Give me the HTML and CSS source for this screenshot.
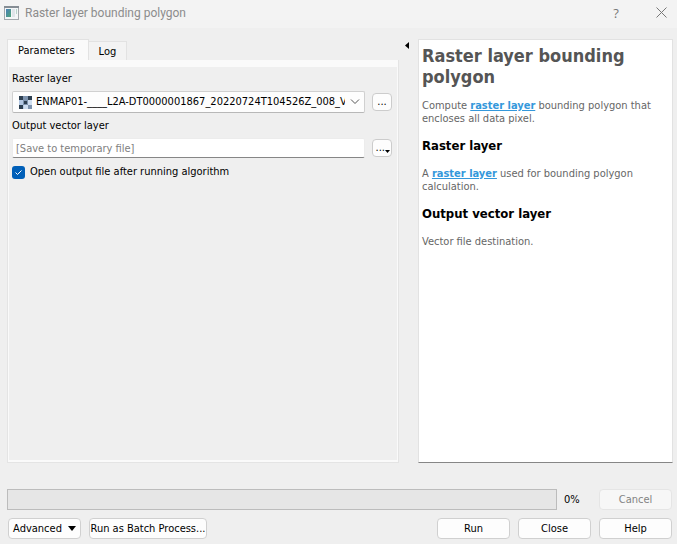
FILE: index.html
```html
<!DOCTYPE html>
<html lang="en">
<head>
<meta charset="utf-8">
<title>Raster layer bounding polygon</title>
<link rel="stylesheet" href="styles.css">
</head>
<body>
<header class="titlebar">
  <svg class="app-icon" width="15" height="14" viewBox="0 0 15 14" aria-hidden="true">
    <defs><linearGradient id="pane" x1="0" y1="0" x2="1" y2="1"><stop offset="0" stop-color="#4a80b8"/><stop offset="1" stop-color="#4fa578"/></linearGradient></defs>
    <rect x="0.5" y="0.5" width="14" height="13" fill="#f4f6f8" stroke="#a3a8ad"/>
    <path d="M0 1h15" stroke="#858d94" stroke-width="2"/>
    <rect x="2" y="3" width="5" height="8" fill="url(#pane)"/>
    <rect x="8" y="3" width="3" height="8" fill="#dfe5ea"/>
    <rect x="12" y="3" width="1" height="5" fill="#b9d4cc"/>
  </svg>
  <h1 class="window-title">Raster layer bounding polygon</h1>
  <button class="caption-button" type="button" aria-label="Help">?</button>
  <button class="caption-button" type="button" aria-label="Close window">
    <svg width="11" height="11" viewBox="0 0 11 11"><path d="M.5.5l10 10M10.500.5l-10 10" fill="none" stroke="#777" stroke-width="1"/></svg>
  </button>
</header>
<main class="dialog">
  <div class="content">
    <section class="left">
      <div class="tabs" role="tablist">
        <button class="tab active" type="button" role="tab" aria-selected="true">Parameters</button>
        <button class="tab" type="button" role="tab" aria-selected="false">Log</button>
      </div>
      <div class="pane">
        <form class="form">
          <label class="label" for="raster">Raster layer</label>
          <div class="row">
            <div class="combo">
              <svg class="raster-icon" width="13" height="13" viewBox="0 0 13 13" aria-hidden="true">
                <rect width="13" height="13" fill="#b3c8e3"/>
                <path fill="#2c3e50" d="M0 0h4v4H0zM9 0h4v4H9zM5 5h3v3H5zM0 9h4v4H0z"/>
                <path fill="#7d92ad" d="M4 0h5v4H4zM4 4h1v5H4zM8 4h1v5H8zM5 4h3v1H5zM5 8h3v1H5zM9 9h4v4H9z"/>
                <path fill="#cfdef0" d="M5 9h4v4H5zM9 4h4v5H9z"/>
              </svg>
              <select class="select" id="raster"><option>ENMAP01-____L2A-DT0000001867_20220724T104526Z_008_V010302</option></select>
              <svg class="chevron" width="10" height="6" viewBox="0 0 10 6" aria-hidden="true"><path d="M1 .5l4 4 4-4" fill="none" stroke="#555"/></svg>
            </div>
            <button class="browse" type="button" aria-label="Select raster layer">...</button>
          </div>
          <label class="label" for="output">Output vector layer</label>
          <div class="row">
            <input class="text" id="output" type="text" placeholder="[Save to temporary file]">
            <button class="browse menu" type="button" aria-label="Output options">...<svg class="browse-arrow" width="5" height="3" viewBox="0 0 5 3"><path d="M0 0h5L2.500 3z"/></svg></button>
          </div>
          <label class="check"><input type="checkbox" checked>Open output file after running algorithm</label>
        </form>
      </div>
    </section>
    <button class="splitter" type="button" aria-label="Collapse help"><svg width="4" height="7" viewBox="0 0 4 7"><path d="M4 0v7L0 3.500z"/></svg></button>
    <article class="help">
      <h2>Raster layer bounding polygon</h2>
      <p>Compute <a href="#">raster layer</a> bounding polygon that encloses all data pixel.</p>
      <h3>Raster layer</h3>
      <p>A <a href="#">raster layer</a> used for bounding polygon calculation.</p>
      <h3>Output vector layer</h3>
      <p>Vector file destination.</p>
    </article>
  </div>
  <div class="progress-row">
    <div class="progress" role="progressbar" aria-label="Progress" aria-valuenow="0" aria-valuemin="0" aria-valuemax="100"></div>
    <span class="percent">0%</span>
    <button class="button" type="button" disabled>Cancel</button>
  </div>
  <footer class="actions">
    <button class="button advanced" type="button">Advanced <svg width="8" height="5" viewBox="0 0 8 5"><path d="M0 0h8L4 5z"/></svg></button>
    <button class="button batch" type="button">Run as Batch Process...</button>
    <span class="spacer"></span>
    <button class="button" type="button">Run</button>
    <button class="button" type="button">Close</button>
    <button class="button" type="button">Help</button>
  </footer>
</main>
</body>
</html>
```
FILE: styles.css
```css
* { box-sizing: border-box; }

body {
  margin: 0;
  min-height: 100vh;
  display: flex;
  flex-direction: column;
  background: #efefef;
  color: #000;
  font: 11px/14px "DejaVu Sans Condensed", "DejaVu Sans", sans-serif;
}

button, input, select { font: inherit; color: inherit; margin: 0; }
svg { display: block; flex: none; }

.titlebar {
  display: flex;
  align-items: center;
  height: 28px;
  padding: 0 6px 3px 4px;
  background: #f3f3f3;
  color: #8c8c8c;
}
.app-icon { margin-right: 6px; }
.window-title {
  flex: 1;
  margin: 0;
  font: 12px/16px Roboto, sans-serif;
}
.caption-button {
  display: grid;
  place-items: center;
  width: 20px;
  height: 20px;
  padding: 0;
  border: 0;
  background: none;
  color: #777;
  font: 13px/16px "Open Sans", sans-serif;
}
.caption-button + .caption-button { margin-left: 25px; }

.dialog {
  flex: 1;
  display: flex;
  flex-direction: column;
  padding: 11px 4px 5px 7px;
}
.content { flex: 1; display: flex; }

.left { flex: 1; min-width: 0; display: flex; flex-direction: column; }
.tabs { display: flex; align-items: flex-end; height: 21px; }
.tab {
  height: 19px;
  padding: 1px 10px 0;
  border: 1px solid #e2e2e2;
  border-left: 0;
  border-bottom: 0;
  background: #f3f3f3;
}
.tab.active {
  height: 21px;
  padding-right: 13px;
  border-left: 1px solid #e2e2e2;
  background: #fafafa;
}
.pane {
  flex: 1;
  padding: 7px 1px 2px;
  border: 1px solid #e4e4e4;
  border-top: 0;
  background: #fafafa;
}
.form {
  display: flex;
  flex-direction: column;
  height: 100%;
  padding: 5px 5px 0 3px;
  background: #efefef;
}
.label { margin-bottom: 5px; }
.row { display: flex; align-items: center; gap: 7px; margin-bottom: 6px; }
.combo {
  flex: 1;
  min-width: 0;
  display: flex;
  align-items: center;
  height: 22px;
  padding: 0 4px 0 6px;
  border: 1px solid #d0d0d0;
  border-bottom-color: #b8b8b8;
  border-radius: 2px;
  background: #fdfdfd;
}
.select {
  flex: 1;
  min-width: 0;
  padding: 0;
  margin: 0 5px 0 4px;
  border: 0;
  background: none;
  appearance: none;
  text-overflow: clip;
}
.browse {
  width: 20px;
  height: 18px;
  padding: 0;
  border: 1px solid #ccc;
  border-radius: 4px;
  background: #fdfdfd;
}
.menu { display: flex; align-items: center; justify-content: flex-end; padding-right: 1px; }
.browse-arrow { margin-top: 7px; }
.text {
  flex: 1;
  min-width: 0;
  height: 20px;
  padding: 0 3px;
  border: 1px solid #ececec;
  border-bottom-color: #868686;
  border-radius: 2px;
  background: #fff;
}
.text::placeholder { color: #808080; opacity: 1; }
.check { display: flex; align-items: center; gap: 5px; margin-top: 1px; }
.check input {
  appearance: none;
  width: 13px;
  height: 13px;
  border-radius: 3px;
  background: #005fb8 url("data:image/svg+xml,%3Csvg xmlns='http://www.w3.org/2000/svg' viewBox='0 0 13 13'%3E%3Cpath d='M3.500 6.500l2 2 4-4' fill='none' stroke='white'/%3E%3C/svg%3E");
}

.splitter {
  align-self: flex-start;
  width: 19px;
  height: 11px;
  padding: 1px 0 0 6px;
  border: 0;
  background: none;
}

.help {
  width: 255px;
  padding: 5px 3px;
  border: 1px solid #e2e2e2;
  border-bottom-color: #868686;
  background: #fff;
  color: #666;
}
.help h2 { margin: 0 0 12px; font-size: 18px; line-height: 21px; color: #555; }
.help h3 { margin: 0 0 13px; font-size: 13px; line-height: 16px; color: #000; }
.help p { margin: 0 0 13px; line-height: 13px; }
.help a { color: #3498db; font-weight: bold; }

.progress-row { display: flex; align-items: center; margin: 26px 1px 8px 0; }
.progress { flex: 1; height: 21px; border: 1px solid #bcbcbc; background: #e6e6e6; }
.percent { width: 42px; padding-left: 7px; }
.actions { display: flex; gap: 8px; padding: 0 1px; }
.spacer { flex: 1; }
.button {
  width: 73px;
  height: 21px;
  padding: 0;
  border: 1px solid #d0d0d0;
  border-radius: 4px;
  background: #fdfdfd;
}
.button:disabled { color: #838383; border-color: #e5e5e5; background: #f7f7f7; }
.advanced { display: flex; align-items: center; justify-content: center; gap: 6px; }
.batch { width: 118px; white-space: nowrap; }
```
